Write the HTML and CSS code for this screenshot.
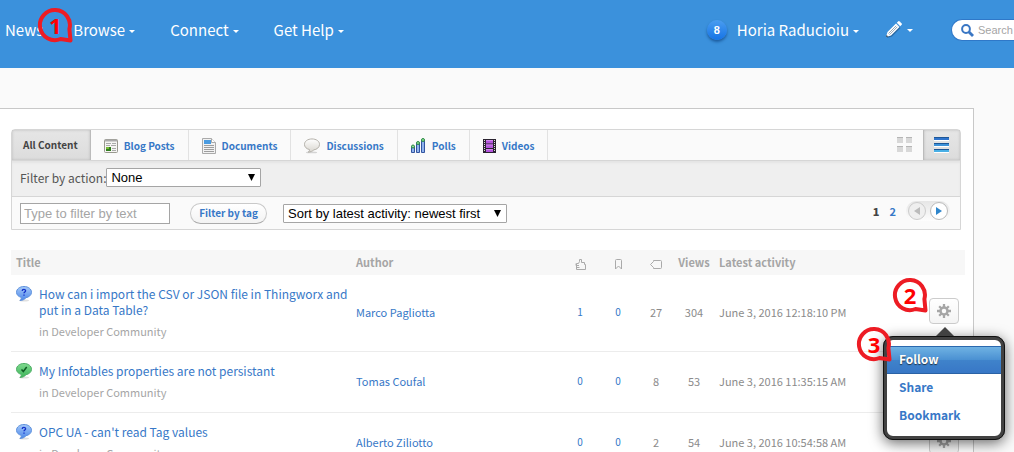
FILE: index.html
```html
<!DOCTYPE html>
<html lang="en">
<head>
<meta charset="utf-8">
<title>Content</title>
<link rel="stylesheet" href="styles.css">
</head>
<body>
<svg class="defs" aria-hidden="true">
  <defs>
    <linearGradient id="blueBubble" x1="0" y1="0" x2="0" y2="1"><stop offset="0" stop-color="#a5c9f8"/><stop offset="1" stop-color="#4c87ea"/></linearGradient>
    <linearGradient id="greenBubble" x1="0" y1="0" x2="0" y2="1"><stop offset="0" stop-color="#7fd98f"/><stop offset="1" stop-color="#3cb559"/></linearGradient>
    <linearGradient id="greyBubble" x1="0" y1="0" x2="0" y2="1"><stop offset="0" stop-color="#ffffff"/><stop offset="1" stop-color="#d9d6cf"/></linearGradient>
    <symbol id="question" viewBox="0 0 16 16">
      <ellipse cx="8" cy="14.500" rx="5" ry="1" fill="#000" opacity=".12"/>
      <path d="M8 .5c4.300 0 7.500 2.500 7.500 5.800 0 2.900-2.700 4.900-5.500 5.400-1.500 1.900-3.600 2.700-6 2.800 1-1 1.400-2 1.300-3.100C2.400 10.600.5 8.800.5 6.300.5 3 3.700.5 8 .5z" fill="url(#blueBubble)" stroke="#5f92dc"/>
      <path d="M6.200 5c0-2 3.400-2 3.400-.2C9.600 6 8 6 8 7.300M8 8.500v1.200" fill="none" stroke="#1230c8" stroke-width="1.300"/>
    </symbol>
    <symbol id="answered" viewBox="0 0 16 16">
      <ellipse cx="8" cy="14.500" rx="5" ry="1" fill="#000" opacity=".12"/>
      <path d="M8 .5c4.300 0 7.500 2.500 7.500 5.800 0 2.900-2.700 4.900-5.500 5.400-1.500 1.900-3.600 2.700-6 2.800 1-1 1.400-2 1.300-3.100C2.400 10.600.5 8.800.5 6.300.5 3 3.700.5 8 .5z" fill="url(#greenBubble)" stroke="#4fae66"/>
      <path d="M5.500 6.500l1.800 2L10.700 4" fill="none" stroke="#0d5a22" stroke-width="1.500"/>
    </symbol>
    <symbol id="callout" viewBox="0 0 36 36">
      <path d="M32.400 22A15 15 0 1 0 23.500 32L33.500 33.500z" fill="none" stroke="#ed1c24" stroke-width="4" stroke-linejoin="round"/>
    </symbol>
    <symbol id="gear" viewBox="0 0 16 16">
      <g stroke="#a6a6a6" stroke-width="2.600"><path d="M8 0v16M0 8h16M2.500 2.500l11 11M13.500 2.500l-11 11"/></g>
      <circle cx="8" cy="8" r="5.400" fill="#a6a6a6"/><circle cx="8" cy="8" r="2.600" fill="#fafafa"/>
    </symbol>
    <symbol id="arrow" viewBox="0 0 7 7"><path d="M0 0h7L3.500 7z"/></symbol>
  </defs>
</svg>
<div class="page">
  <header class="topbar">
    <nav class="nav">
      <a href="#">News</a>
      <a href="#" class="marked">Browse<i class="caret"></i>
        <span class="callout callout-nav"><svg><use href="#callout"/></svg><b>1</b></span>
      </a>
      <a href="#">Connect<i class="caret"></i></a>
      <a href="#">Get Help<i class="caret"></i></a>
    </nav>
    <div class="account">
      <span class="count">8</span>
      <a href="#">Horia Raducioiu<i class="caret"></i></a>
      <a href="#" class="create" aria-label="Create">
        <svg width="18" height="18" viewBox="0 0 18 18"><path d="M2 17l1.500-5L12 3.500l3.500 3.500L7 15.500z" fill="#1c4f80" opacity=".6"/><path d="M1 16l1.500-5L11 2.500l3.500 3.500L6 14.500z" fill="#fff"/><path d="M11.800 1.700L13.300.3q.7-.5 1.400.1l2 2q.5.700 0 1.300l-1.500 1.500z" fill="#fff"/><path d="M3.500 12.500l7.700-7.700M4.500 13.600l7.800-7.800" stroke="#6d8295" stroke-width=".7"/><path d="M1 16l.6-2 1.500 1.400z" fill="#234"/></svg><i class="caret"></i></a>
    </div>
    <label class="search">
      <svg width="13" height="13" viewBox="0 0 13 13" fill="none" stroke="#3a77c4"><circle cx="5" cy="5" r="3.900" stroke-width="2"/><path d="M8 8l4 4" stroke-width="2.800"/></svg>
      <input type="text" placeholder="Search" aria-label="Search">
    </label>
  </header>

  <main class="panel">
    <section class="filters">
      <div class="tabs">
        <button class="tab active">All Content</button>
        <button class="tab"><svg width="14" height="14" viewBox="0 0 14 14"><rect x=".5" y=".5" width="13" height="13" rx="1" fill="#f5f5f2" stroke="#99998f"/><path d="M1 1.500h12" stroke="#aaa" stroke-width="2"/><path d="M2 4.500h5M8 4.500h4M2 6.500h4M7 6.500h5M8 9.500h4M8 11.500h4" stroke="#aaa"/><path d="M2 8h5v4H2z" fill="#2f7d1c"/><path d="M2 8h3v2H2z" fill="#77bb35"/></svg>Blog Posts</button>
        <button class="tab"><svg width="14" height="16" viewBox="0 0 14 16"><path d="M.5.5h9l4 4v11H.5z" fill="#f2f2f2" stroke="#aaa"/><path d="M2 2h7v4H2z" fill="#4a9be0"/><path d="M9.500.5v4h4" fill="#fff" stroke="#aaa"/><path d="M2 7.500h10M2 9.500h10M2 11.500h10M2 13.500h10" stroke="#9d9d9d"/></svg>Documents</button>
        <button class="tab"><svg width="16" height="16" viewBox="0 0 17 16"><ellipse cx="8" cy="14.800" rx="6" ry="1" fill="#000" opacity=".15"/><path d="M8.500.5c4.500 0 8 2.400 8 5.800s-3.200 5.400-6 5.800c-1.500 1.400-3.400 2.200-6 2.400 1-.8 1.500-1.700 1.300-2.700C2.500 11 .5 9 .5 6.300.5 2.900 4 .5 8.500.5z" fill="url(#greyBubble)" stroke="#b0ada5"/></svg>Discussions</button>
        <button class="tab"><svg width="15" height="15" viewBox="0 0 15 15"><g fill="#8fb2ee" stroke="#33559f"><path d="M.5 8.500h3v6h-3zM5.500 5.500h3v9h-3zM10.500 2.500h3v12h-3z"/></g><g fill="#8fdc98" stroke="#2a8a42"><circle cx="2" cy="8.500" r="1.500"/><circle cx="7" cy="5" r="1.500"/><circle cx="12" cy="2" r="1.500"/></g></svg>Polls</button>
        <button class="tab"><svg width="13" height="14" viewBox="0 0 13 14"><path d="M0 0h13v14H0z" fill="#2a2330"/><path d="M3 1h7v3.500H3zM3 5.500h7V9H3zM3 10h7v3H3z" fill="#b455dd"/><path d="M3 1h7v1H3zM3 5.500h7v1H3zM3 10h7v1H3z" fill="#d488f0"/><path d="M1.500 1v12M11.500 1v12" stroke="#ddd" stroke-dasharray="1 1"/></svg>Videos</button>
        <button class="view view-grid" aria-label="Grid view"><svg width="16" height="16" viewBox="0 0 16 16"><path d="M0 0h6v6H0zM9 0h6v6H9zM0 9h6v6H0zM9 9h6v6H9z" fill="#d8d8d8"/><path d="M0 0h6v1H0zM9 0h6v1H9zM0 9h6v1H0zM9 9h6v1H9z" fill="#b5b5b5"/></svg></button>
        <button class="view active" aria-label="List view"><svg width="16" height="16" viewBox="0 0 16 16"><path d="M0 0h15v3H0z" fill="#2f74cc"/><path d="M0 6h15v3H0z" fill="#3d92d8"/><path d="M0 12h15v3H0z" fill="#49afe5"/><path d="M0 0h15v1H0zM0 6h15v1H0zM0 12h15v1H0z" fill="#1e5797"/><path d="M0 3h15v1H0zM0 9h15v1H0zM0 15h15v1H0z" fill="#fff"/></svg></button>
      </div>
      <div class="row row-action">
        <label for="action">Filter by action:</label>
        <span class="pick pick-action"><select id="action"><option>None</option></select><svg><use href="#arrow"/></svg></span>
      </div>
      <div class="row row-text">
        <input class="textfilter" type="text" placeholder="Type to filter by text" aria-label="Filter by text">
        <button class="tagbtn">Filter by tag</button>
        <span class="pick pick-sort"><select aria-label="Sort"><option>Sort by latest activity: newest first</option></select><svg><use href="#arrow"/></svg></span>
        <nav class="pager">
          <b>1</b><a href="#">2</a>
          <span class="steps">
            <button class="off" aria-label="Previous" disabled><svg width="6" height="8" viewBox="0 0 6 8"><path d="M6 0v8L0 4z" fill="#bbb"/></svg></button>
            <button aria-label="Next"><svg width="6" height="8" viewBox="0 0 6 8"><path d="M0 0v8l6-4z" fill="#2f86cc"/></svg></button>
          </span>
        </nav>
      </div>
    </section>

    <table class="list">
      <colgroup><col><col class="c-author"><col class="c-num"><col class="c-num"><col class="c-num"><col class="c-num"><col class="c-date"><col class="c-act"></colgroup>
      <thead>
        <tr>
          <th>Title</th><th>Author</th>
          <th class="num"><svg width="11" height="11" viewBox="0 0 11 11"><path d="M1.500 4.500h2l1-2v-2h2v3h3v2h1v5h-9zM1 4.500v2h3M1.500 8.500h3" fill="none" stroke="#aaa"/></svg></th>
          <th class="num"><svg width="9" height="11" viewBox="0 0 9 11"><path d="M1.500 10V1.500q0-1 1-1h4q1 0 1 1V10l-3-3z" fill="none" stroke="#aaa"/></svg></th>
          <th class="num"><svg width="12" height="11" viewBox="0 0 12 11"><path d="M3.500 1.500h7q1 0 1 1v6q0 1-1 1h-7v-1l-3-3 3-3z" fill="none" stroke="#aaa"/></svg></th>
          <th class="num">Views</th><th class="date">Latest activity</th><th></th>
        </tr>
      </thead>
      <tbody>
        <tr>
          <td class="title"><div class="topic"><svg><use href="#question"/></svg><div><a href="#">How can i import the CSV or JSON file in Thingworx and put in a Data Table?</a><p>in Developer Community</p></div></div></td>
          <td><a href="#">Marco Pagliotta</a></td>
          <td class="num"><a href="#" class="small">1</a></td><td class="num"><a href="#" class="small">0</a></td><td class="num">27</td><td class="num">304</td>
          <td class="date">June 3, 2016 12:18:10 PM</td>
          <td class="act"><div class="actions">
            <button class="gear" aria-label="Actions"><svg><use href="#gear"/></svg></button>
            <span class="callout callout-gear"><svg><use href="#callout"/></svg><b>2</b></span>
            <div class="menu">
              <a href="#" class="current">Follow</a><a href="#">Share</a><a href="#">Bookmark</a>
              <span class="callout callout-menu"><svg><use href="#callout"/></svg><b>3</b></span>
            </div>
          </div></td>
        </tr>
        <tr>
          <td class="title"><div class="topic"><svg><use href="#answered"/></svg><div><a href="#">My Infotables properties are not persistant</a><p>in Developer Community</p></div></div></td>
          <td><a href="#">Tomas Coufal</a></td>
          <td class="num"><a href="#" class="small">0</a></td><td class="num"><a href="#" class="small">0</a></td><td class="num">8</td><td class="num">53</td>
          <td class="date">June 3, 2016 11:35:15 AM</td>
          <td class="act"><button class="gear" aria-label="Actions"><svg><use href="#gear"/></svg></button></td>
        </tr>
        <tr>
          <td class="title"><div class="topic"><svg><use href="#question"/></svg><div><a href="#">OPC UA - can't read Tag values</a><p>in Developer Community</p></div></div></td>
          <td><a href="#">Alberto Ziliotto</a></td>
          <td class="num"><a href="#" class="small">0</a></td><td class="num"><a href="#" class="small">0</a></td><td class="num">2</td><td class="num">54</td>
          <td class="date">June 3, 2016 10:54:58 AM</td>
          <td class="act"><button class="gear" aria-label="Actions"><svg><use href="#gear"/></svg></button></td>
        </tr>
      </tbody>
    </table>
  </main>
</div>
</body>
</html>
```
FILE: styles.css
```css
* { box-sizing: border-box; }
body {
  margin: 0;
  background: #fafafa;
  color: #8b8b8b;
  font-family: "Noto Sans CJK SC", "Noto Sans", sans-serif;
  font-size: 12px;
  line-height: 16px;
}
a { color: #3778c7; text-decoration: none; }
button { font: inherit; margin: 0; cursor: pointer; }
.defs { position: absolute; width: 0; height: 0; }
.page { height: 100vh; overflow: hidden; }

/* top bar */
.topbar {
  display: flex;
  align-items: center;
  height: 68px;
  padding: 0 0 8px 5px;
  background: #3b91dc;
}
.topbar a { color: #fff; font-size: 15px; line-height: 20px; }
.nav { display: flex; gap: 35px; }
.marked { position: relative; margin-left: -5px; }
.caret {
  display: inline-block;
  margin-left: 4px;
  border: 3px solid transparent;
  border-top-color: #fff;
  border-bottom: 0;
  vertical-align: middle;
}
.account { display: flex; align-items: center; gap: 10px; margin-left: auto; }
.count {
  width: 20px;
  height: 20px;
  border-radius: 50%;
  background: linear-gradient(#4a9df0, #1573e6);
  box-shadow: 0 2px 3px #1c5a9c;
  color: #fff;
  font: bold 11px/20px "Liberation Sans", Arial, sans-serif;
  text-align: center;
}
.create { display: flex; align-items: center; margin-left: 16px; }
.search {
  display: flex;
  align-items: center;
  gap: 4px;
  width: 63px;
  height: 22px;
  margin-left: 38px;
  padding-left: 9px;
  border: 1px solid #2f78c8;
  border-right: 0;
  border-radius: 11px 0 0 11px;
  background: #fff;
  overflow: hidden;
}
.search svg { flex: none; }
.search input {
  width: 100%;
  min-width: 0;
  padding: 0;
  border: 0;
  font: 11px "Liberation Sans", Arial, sans-serif;
}
::placeholder { color: #a5a5a5; opacity: 1; }

/* numbered markers */
.callout { position: absolute; width: 36px; height: 36px; color: #f00; }
.callout svg { position: absolute; left: 0; top: 0; width: 36px; height: 36px; }
.callout b {
  position: relative;
  display: block;
  font: bold 22px/36px "Noto Sans", sans-serif;
  text-align: center;
}
.callout-nav { left: -36px; top: -13px; }
.callout-gear { left: -37px; top: -21px; }
.callout-menu { left: -31px; top: -14px; }

/* content panel */
.panel {
  margin: 40px 40px 0 0;
  padding: 20px 8px 0 11px;
  border: 1px solid #c8c8c8;
  border-left: 0;
  background: #fff;
}
.filters {
  margin-right: 4px;
  border: 1px solid #d6d6d6;
  border-radius: 4px 4px 0 0;
  background: #fafafa;
}
.tabs { display: flex; height: 31px; border-bottom: 1px solid #d6d6d6; }
.tab {
  display: flex;
  align-items: center;
  gap: 6px;
  padding: 1px 13px 0;
  border: 0;
  border-right: 1px solid #e2e2e2;
  background: none;
  color: #3778c7;
  font-size: 10px;
  font-weight: bold;
}
.active {
  border: 0;
  border-right: 1px solid #bbb;
  background: linear-gradient(#e6e6e6, #dcdcdc);
  box-shadow: inset 0 0 3px #bbb;
}
.tab.active { padding: 0 12px 0 11px; color: #444; }
.view { width: 37px; padding: 3px 0 0; border: 0; background: none; }
.view-grid { margin-left: auto; }
.view.active { border-left: 1px solid #bbb; background: linear-gradient(#e6e6e6, #dcdcdc); }
.row { display: flex; align-items: center; padding: 0 8px; }
.row-action {
  height: 36px;
  padding-bottom: 2px;
  border-bottom: 1px solid #d6d6d6;
  background: #efefef;
  box-shadow: inset 0 2px 2px #e4e4e4;
  color: #555;
}
.row-text { height: 32px; }
.pick { position: relative; }
.pick select {
  display: block;
  width: 100%;
  height: 19px;
  padding: 0 4px;
  border: 1px solid #a5a5a5;
  border-radius: 1px;
  background: #fff;
  color: #000;
  font: 13px "Liberation Sans", Arial, sans-serif;
  appearance: none;
}
.pick svg { position: absolute; right: 6px; top: 6px; width: 7px; height: 7px; pointer-events: none; }
.pick-action { width: 155px; }
.pick-sort { width: 224px; }
.textfilter {
  width: 150px;
  height: 21px;
  padding: 0 3px;
  border: 1px solid #a5a5a5;
  background: #fff;
  font: 13px "Liberation Sans", Arial, sans-serif;
}
.tagbtn {
  width: 77px;
  height: 21px;
  margin: 0 16px 0 20px;
  padding: 0;
  border: 1px solid #c9c9c9;
  border-bottom-color: #aaa;
  border-radius: 11px;
  background: linear-gradient(#fff, #f3f3f3);
  color: #3778c7;
  font-size: 10px;
  font-weight: bold;
  line-height: 18px;
}
.pager { display: flex; align-items: center; gap: 10px; margin-left: auto; padding-bottom: 4px; font-size: 11px; font-weight: bold; }
.pager b { color: #444; }
.steps {
  display: flex;
  gap: 4px;
  margin-right: 2px;
  padding: 1px 2px;
  border-radius: 11px;
  background: linear-gradient(#e6e6e6, #fdfdfd);
}
.steps button {
  display: grid;
  place-items: center;
  width: 18px;
  height: 18px;
  padding: 0;
  border: 1px solid #bbb;
  border-radius: 50%;
  background: #fff;
}
.steps .off { border-color: #ccc; background: #efefef; }

/* topic list */
.list { width: 100%; margin-top: 20px; border-collapse: collapse; table-layout: fixed; }
.c-author { width: 210px; }
.c-num { width: 38px; }
.c-date { width: 180px; }
.c-act { width: 72px; }
.list th {
  height: 25px;
  padding: 0 5px 2px;
  background: #f7f7f7;
  color: #a5a5a5;
  font-size: 11px;
  text-align: left;
}
.list th svg { display: block; margin: 5px auto 0; }
.list td { padding: 10px 5px 13px; border-bottom: 1px solid #ececec; font-size: 11px; }
.list .title { padding: 11px 0 12px 5px; }
.list .date { padding-left: 6px; }
.list .num { padding-left: 0; padding-right: 0; text-align: center; }
.small { font-size: 10px; }
.topic { display: flex; gap: 7px; }
.topic svg { flex: none; width: 16px; height: 16px; }
.topic a { font-size: 12px; }
.topic p { margin: 5px 0 0; color: #a5a5a5; font-size: 11px; }
.list .act { padding: 0 6px 4px; text-align: right; }
.actions { position: relative; width: 30px; height: 26px; margin-left: auto; }
.gear {
  display: inline-grid;
  place-items: center;
  width: 30px;
  height: 26px;
  padding: 0;
  border: 1px solid #ccc;
  border-radius: 4px;
  background: linear-gradient(#fff, #f4f4f4);
  vertical-align: middle;
}
.gear svg { width: 14px; height: 14px; }

/* action menu */
.menu {
  position: absolute;
  z-index: 2;
  top: 38px;
  left: 50%;
  width: 122px;
  padding: 6px 0;
  transform: translateX(-50%);
  border: 4px solid #424242;
  border-radius: 10px;
  outline: 1px solid #111;
  outline-offset: -1px;
  background: #fff;
  box-shadow: 0 3px 14px rgba(0, 0, 0, .6);
  text-align: left;
}
.menu::before {
  content: "";
  position: absolute;
  top: -13px;
  left: 50%;
  margin-left: -8px;
  border: 9px solid transparent;
  border-top: 0;
  border-bottom-color: #424242;
}
.menu a { display: block; padding: 5px 12px 7px; font-size: 12px; font-weight: bold; }
.menu .current {
  border-top: 1px solid #2a68ae;
  border-bottom: 1px solid #2a62a5;
  padding: 4px 12px 6px;
  background: linear-gradient(#6fb2e3, #4a90d2 50%, #3f83cb 51%, #3877c6);
  color: #fff;
  text-shadow: 0 1px 1px #234;
}
```
